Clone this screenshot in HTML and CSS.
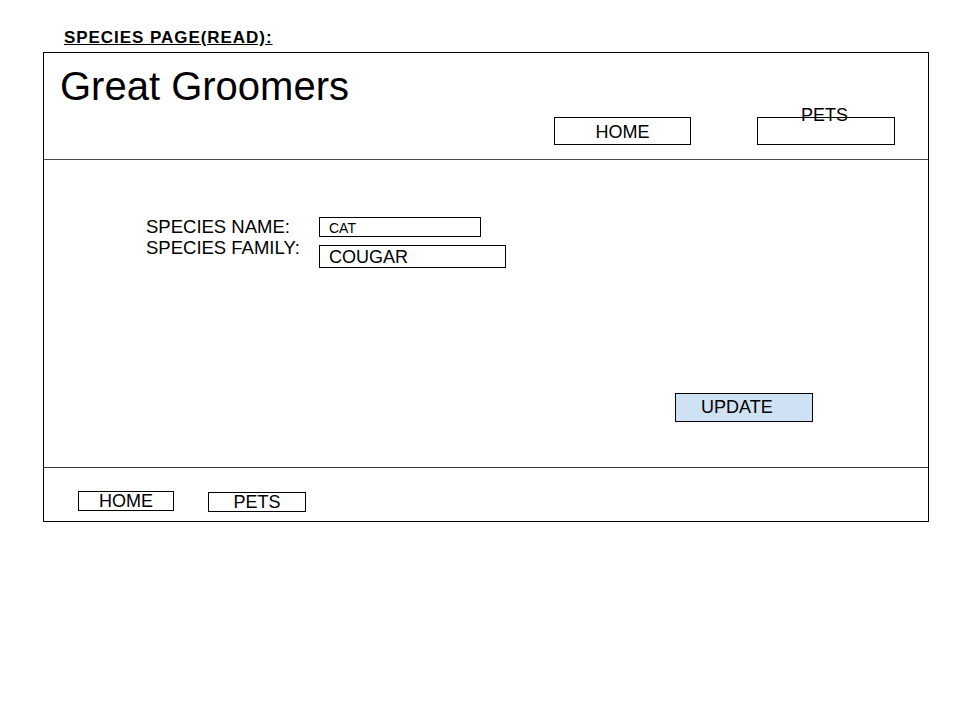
FILE: index.html
```html
<!DOCTYPE html>
<html lang="en">
<head>
<meta charset="utf-8">
<title>Species Page (Read)</title>
<link rel="stylesheet" href="styles.css">
</head>
<body>
<div class="page">
  <h1 class="page-title">SPECIES PAGE(READ):</h1>
  <div class="frame">
    <header class="header">
      <div class="brand">Great Groomers</div>
      <nav class="top-nav">
        <div class="nav-box nav-home">HOME</div>
        <div class="nav-box nav-pets"><span class="pets-label">PETS</span></div>
      </nav>
    </header>
    <main class="main">
      <div class="form">
        <div class="labels">
          <div>SPECIES NAME:</div>
          <div>SPECIES FAMILY:</div>
        </div>
        <div class="fields">
          <div class="field field-name">CAT</div>
          <div class="field field-family">COUGAR</div>
        </div>
      </div>
      <div class="update-btn">UPDATE</div>
    </main>
    <footer class="footer">
      <div class="foot-box foot-home">HOME</div>
      <div class="foot-box foot-pets">PETS</div>
    </footer>
  </div>
</div>
</body>
</html>
```
FILE: styles.css
```css
* { box-sizing: border-box; }
html, body { margin: 0; padding: 0; background: #fff; }
body {
  font-family: "Liberation Sans", Arial, sans-serif;
  color: #000;
}
.page {
  padding: 29px 0 0 43px;
}
.page-title {
  margin: 0 0 5px 21px;
  font-size: 17px;
  line-height: 18px;
  font-weight: bold;
  letter-spacing: 0.95px;
  text-decoration: underline;
}
.frame {
  width: 886px;
  height: 470px;
  border: 1px solid #000;
  display: flex;
  flex-direction: column;
}
.header {
  height: 107px;
  border-bottom: 1px solid #4a4a4a;
  padding: 10px 0 0 16px;
}
.brand {
  font-size: 40px;
  line-height: 46px;
}
.top-nav {
  display: flex;
  gap: 66px;
  margin: 8px 0 0 494px;
}
.nav-box {
  height: 28px;
  border: 1px solid #000;
  font-size: 18px;
  display: flex;
  justify-content: center;
}
.nav-home {
  width: 137px;
  padding-top: 3px;
  line-height: 22px;
}
.nav-pets {
  width: 138px;
  line-height: 21px;
  padding-right: 3px;
}
.pets-label {
  margin-top: -13px;
}
.main {
  height: 308px;
  border-bottom: 1px solid #3a3a3a;
  padding: 56px 0 0 102px;
}
.form {
  display: flex;
  font-size: 18.5px;
}
.labels {
  width: 173px;
  line-height: 21px;
}
.fields {
  display: flex;
  flex-direction: column;
  gap: 8px;
  padding-top: 1px;
}
.field {
  border: 1px solid #000;
  padding-left: 9px;
}
.field-name {
  width: 162px;
  height: 20px;
  font-size: 14px;
  line-height: 16px;
  padding-top: 2px;
}
.field-family {
  width: 187px;
  height: 23px;
  font-size: 18px;
  line-height: 19px;
  padding-top: 2px;
}
.update-btn {
  width: 138px;
  height: 29px;
  margin: 125px 0 0 529px;
  background: #cfe2f3;
  border: 1px solid #000;
  font-size: 18px;
  line-height: 21px;
  padding: 3px 0 0 25px;
}
.footer {
  flex: 1;
  display: flex;
  align-items: flex-start;
  gap: 34px;
  padding: 23px 0 0 34px;
}
.foot-box {
  height: 20px;
  border: 1px solid #000;
  font-size: 18px;
  line-height: 18px;
  text-align: center;
}
.foot-home { width: 96px; }
.foot-pets { width: 98px; margin-top: 1px; }
```
